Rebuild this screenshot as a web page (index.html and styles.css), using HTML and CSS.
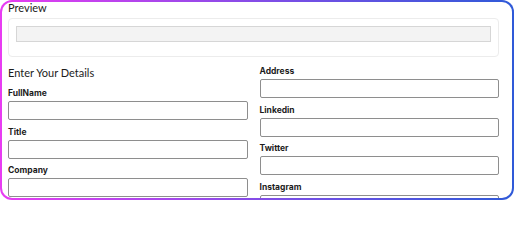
FILE: index.html
```html
<!DOCTYPE html>
<html lang="en">
<head>
<meta charset="utf-8">
<title>Card Builder</title>
<link rel="stylesheet" href="styles.css">
</head>
<body>
<div class="card">
  <div class="section-title">Preview</div>
  <div class="preview-box">
    <div class="preview-bar"></div>
  </div>
  <div class="form-grid">
    <div class="col">
      <div class="details-title">Enter Your Details</div>
      <div class="field">
        <label class="label">FullName</label>
        <input class="input" type="text">
      </div>
      <div class="field">
        <label class="label">Title</label>
        <input class="input" type="text">
      </div>
      <div class="field">
        <label class="label">Company</label>
        <input class="input" type="text">
      </div>
    </div>
    <div class="col">
      <div class="field">
        <label class="label">Address</label>
        <input class="input" type="text">
      </div>
      <div class="field">
        <label class="label">Linkedin</label>
        <input class="input" type="text">
      </div>
      <div class="field">
        <label class="label">Twitter</label>
        <input class="input" type="text">
      </div>
      <div class="field">
        <label class="label">Instagram</label>
        <input class="input" type="text">
      </div>
    </div>
  </div>
</div>
</body>
</html>
```
FILE: styles.css
```css
html, body {
  margin: 0;
  padding: 0;
  background: #ffffff;
  overflow: hidden;
}
body {
  font-family: Inter, "Liberation Sans", sans-serif;
  color: #1c1c1c;
}
.card {
  box-sizing: border-box;
  width: 514px;
  height: 200px;
  border: 2px solid transparent;
  border-radius: 12px;
  background:
    linear-gradient(#ffffff, #ffffff) padding-box,
    linear-gradient(to right, #e83cf2, #7a4ee6 55%, #2f5ad8) border-box;
  padding: 0 13px 0 6px;
  overflow: hidden;
}
.section-title {
  font-family: Lato, Inter, sans-serif;
  font-size: 11px;
  line-height: 14px;
  height: 14px;
  margin-top: -1px;
}
.preview-box {
  margin-top: 3px;
  border: 1px solid #ececec;
  border-radius: 4px;
  padding: 7px 7px 14px;
}
.preview-bar {
  height: 14px;
  background: #f3f3f3;
  border: 1px solid #d6d6d6;
}
.form-grid {
  display: grid;
  grid-template-columns: 1fr 1fr;
  column-gap: 12px;
  margin-top: 8px;
}
.col {
  display: flex;
  flex-direction: column;
  gap: 5.7px;
}
.details-title {
  font-family: Lato, Inter, sans-serif;
  font-size: 11px;
  line-height: 16px;
  height: 16.3px;
}
.field {
  display: flex;
  flex-direction: column;
}
.label {
  font-size: 8.5px;
  font-weight: 700;
  line-height: 12px;
  margin-bottom: 2px;
}
.input {
  box-sizing: border-box;
  height: 19px;
  width: 100%;
  margin: 0;
  border: 1px solid #8e8e8e;
  border-radius: 2px;
  background: #ffffff;
  padding: 0 4px;
}
```
